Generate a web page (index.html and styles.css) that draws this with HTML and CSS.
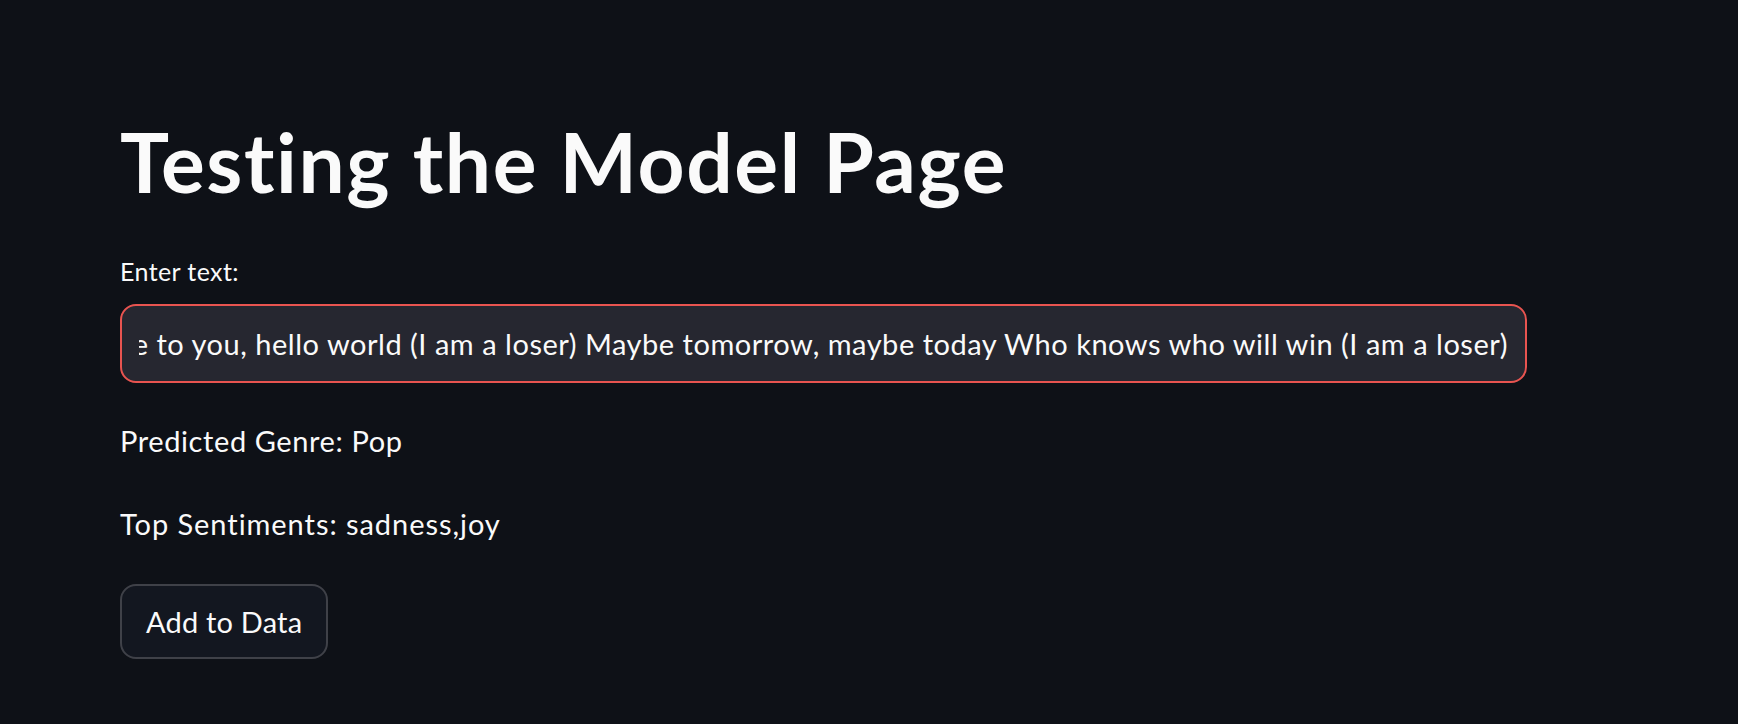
FILE: index.html
```html
<!DOCTYPE html>
<html lang="en">
<head>
<meta charset="utf-8">
<title>Testing the Model Page</title>
<link rel="stylesheet" href="styles.css">
</head>
<body>
<main class="main">
  <h1 class="title">Testing the Model Page</h1>
  <div class="field">
    <label class="field-label">Enter text:</label>
    <div class="input">
      <div class="input-clip">
        <span class="input-text">Hello world, you will never see me again, so I say goodbye to you, hello world (I am a loser) Maybe tomorrow, maybe today Who knows who will win (I am a loser)</span>
      </div>
    </div>
  </div>
  <p class="result result-genre">Predicted Genre: Pop</p>
  <p class="result result-sent">Top Sentiments: sadness,joy</p>
  <button class="btn" type="button">Add to Data</button>
</main>
</body>
</html>
```
FILE: styles.css
```css
html, body {
  margin: 0;
  padding: 0;
  background: #0e1117;
  color: #fafafa;
  font-family: Lato, "Noto Sans", sans-serif;
}

.main {
  width: 1407px;
  padding: 112px 0 40px 120px;
  display: flex;
  flex-direction: column;
  align-items: flex-start;
}

.title {
  margin: 0;
  font-size: 82px;
  font-weight: 700;
  line-height: 98px;
  letter-spacing: 1.6px;
}

.field {
  width: 100%;
  margin-top: 46px;
  display: flex;
  flex-direction: column;
  gap: 18px;
}

.field-label {
  font-size: 25px;
  line-height: 30px;
  letter-spacing: 0.4px;
}

.input {
  box-sizing: border-box;
  width: 100%;
  height: 79px;
  padding: 0 17px;
  background: #262730;
  border: 2px solid #e85450;
  border-radius: 16px;
  display: flex;
  align-items: center;
}

.input-clip {
  flex: 1;
  overflow: hidden;
  display: flex;
  justify-content: flex-end;
}

.input-text {
  white-space: nowrap;
  font-size: 29px;
  line-height: 35px;
  letter-spacing: 0.52px;
}

.result {
  margin: 0;
  font-size: 29px;
  line-height: 34px;
  letter-spacing: 0.6px;
}

.result-genre {
  margin-top: 41px;
}

.result-sent {
  margin-top: 49px;
  letter-spacing: 0.95px;
}

.btn {
  margin-top: 43px;
  box-sizing: border-box;
  height: 75px;
  padding: 0 24px;
  background: #131720;
  color: #fafafa;
  border: 2px solid #3f4148;
  border-radius: 16px;
  font-family: Lato, "Noto Sans", sans-serif;
  font-size: 29px;
  line-height: 34px;
  letter-spacing: 0.2px;
}
```
